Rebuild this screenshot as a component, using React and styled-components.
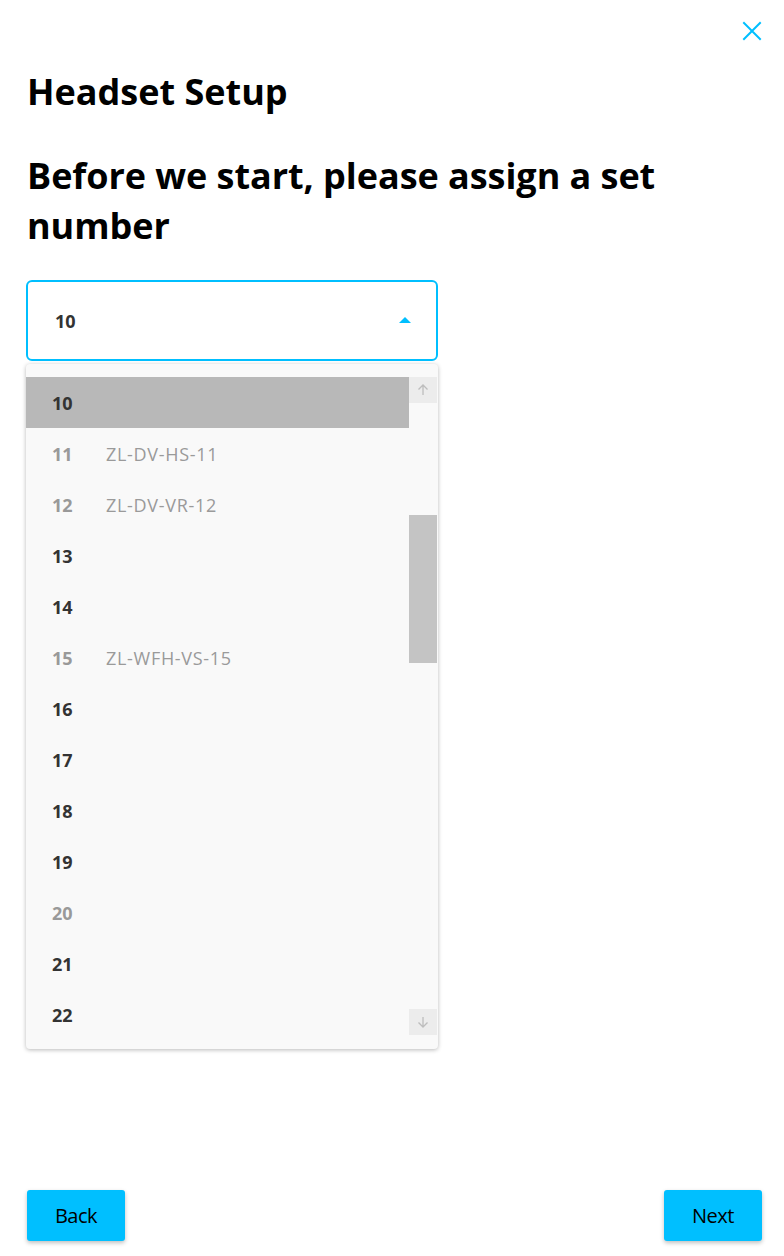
import React from "react";
import styled, { createGlobalStyle } from "styled-components";

const Global = createGlobalStyle`
  html, body { margin: 0; padding: 0; background: #fff; }
  body { font-family: "Open Sans", "Noto Sans", sans-serif; }
  * { box-sizing: border-box; }
`;

const BLUE = "#00bfff";

const Page = styled.div`
  height: 100vh;
  display: flex;
  flex-direction: column;
  padding: 18px 22px 15px 28px;
`;

const TopBar = styled.div`
  display: flex;
  justify-content: flex-end;
  height: 28px;
`;

const CloseButton = styled.button`
  border: 0;
  background: none;
  padding: 0;
  width: 26px;
  height: 26px;
  display: flex;
  align-items: center;
  justify-content: center;
  cursor: pointer;
  margin-right: -3px;
`;

const Title = styled.h1`
  margin: 24px 0 0 -1px;
  font-family: "Open Sans", sans-serif;
  font-weight: 700;
  font-size: 36px;
  line-height: 44px;
  letter-spacing: 0;
  color: #000;
`;

const Subtitle = styled.h2`
  margin: 37px 0 0 -1px;
  font-family: "Open Sans", sans-serif;
  font-weight: 700;
  font-size: 36px;
  line-height: 50px;
  letter-spacing: -0.05px;
  color: #000;
  max-width: 680px;
`;

const SelectWrap = styled.div`
  position: relative;
  width: 412px;
  margin-top: 29px;
  margin-left: -2px;
`;

const SelectBox = styled.div`
  height: 81px;
  border: 2px solid ${BLUE};
  border-radius: 6px;
  display: flex;
  align-items: center;
  justify-content: space-between;
  padding: 0 25px 0 27px;
  font-weight: 700;
  font-size: 18px;
  color: #333;
`;

const Caret = styled.span`
  width: 0;
  height: 0;
  border-left: 6.5px solid transparent;
  border-right: 6.5px solid transparent;
  border-bottom: 6px solid ${BLUE};
  margin-top: -2px;
`;

const Menu = styled.div`
  position: absolute;
  top: 84px;
  left: 0;
  right: 0;
  height: 685px;
  background: #f9f9f9;
  border-radius: 4px;
  box-shadow: 0 1px 4px rgba(0, 0, 0, 0.28);
  padding: 13px 1px 14px 0;
  display: flex;
`;

const List = styled.ul`
  list-style: none;
  margin: 0;
  padding: 0;
  flex: 1;
`;

const Item = styled.li`
  height: 51px;
  display: flex;
  align-items: center;
  padding-left: 26px;
  background: ${(p) => (p.$selected ? "#b8b8b8" : "transparent")};
  color: ${(p) => (p.$disabled ? "#999" : "#333")};
  font-size: 18px;
`;

const Num = styled.span`
  font-weight: 700;
  width: 54px;
`;

const Label = styled.span`
  font-weight: 400;
  color: #9a9a9a;
  letter-spacing: 0.7px;
`;

const Scrollbar = styled.div`
  width: 28px;
  display: flex;
  flex-direction: column;
`;

const ScrollBtn = styled.div`
  height: 26px;
  background: #ececec;
  display: flex;
  align-items: center;
  justify-content: center;
`;

const Track = styled.div`
  flex: 1;
  position: relative;
`;

const Thumb = styled.div`
  position: absolute;
  left: 0;
  right: 0;
  top: 112px;
  height: 148px;
  background: #c4c4c4;
`;

const Footer = styled.div`
  margin-top: auto;
  display: flex;
  justify-content: space-between;
  align-items: center;
`;

const Button = styled.button`
  height: 51px;
  min-width: 98px;
  padding: 0 25px;
  border: 0;
  border-radius: 3px;
  background: ${BLUE};
  color: #000;
  font-family: "Open Sans", sans-serif;
  font-size: 20px;
  letter-spacing: -0.5px;
  box-shadow: 0 2px 4px rgba(0, 0, 0, 0.25);
  cursor: pointer;
  margin-left: ${(p) => (p.$first ? "-1px" : "0")};
`;

const items = [
  { n: 10, selected: true },
  { n: 11, label: "ZL-DV-HS-11", disabled: true },
  { n: 12, label: "ZL-DV-VR-12", disabled: true },
  { n: 13 },
  { n: 14 },
  { n: 15, label: "ZL-WFH-VS-15", disabled: true },
  { n: 16 },
  { n: 17 },
  { n: 18 },
  { n: 19 },
  { n: 20, disabled: true },
  { n: 21 },
  { n: 22 },
];

const Arrow = ({ down }) => (
  <svg width="12" height="12" viewBox="0 0 12 12" fill="none" stroke="#bdbdbd" strokeWidth="1.3">
    {down ? (
      <path d="M6 1v10M1.5 6.5L6 11l4.5-4.5" />
    ) : (
      <path d="M6 11V1M1.5 5.5L6 1l4.5 4.5" />
    )}
  </svg>
);

export default function App() {
  return (
    <>
      <Global />
      <Page>
        <TopBar>
          <CloseButton aria-label="Close">
            <svg width="20" height="20" viewBox="0 0 20 20" stroke={BLUE} strokeWidth="2" strokeLinecap="square">
              <path d="M2 2L18 18M18 2L2 18" />
            </svg>
          </CloseButton>
        </TopBar>
        <Title>Headset Setup</Title>
        <Subtitle>Before we start, please assign a set number</Subtitle>
        <SelectWrap>
          <SelectBox>
            <span>10</span>
            <Caret />
          </SelectBox>
          <Menu>
            <List>
              {items.map((it) => (
                <Item key={it.n} $selected={it.selected} $disabled={it.disabled}>
                  <Num>{it.n}</Num>
                  {it.label && <Label>{it.label}</Label>}
                </Item>
              ))}
            </List>
            <Scrollbar>
              <ScrollBtn><Arrow /></ScrollBtn>
              <Track><Thumb /></Track>
              <ScrollBtn><Arrow down /></ScrollBtn>
            </Scrollbar>
          </Menu>
        </SelectWrap>
        <Footer>
          <Button $first>Back</Button>
          <Button>Next</Button>
        </Footer>
      </Page>
    </>
  );
}
